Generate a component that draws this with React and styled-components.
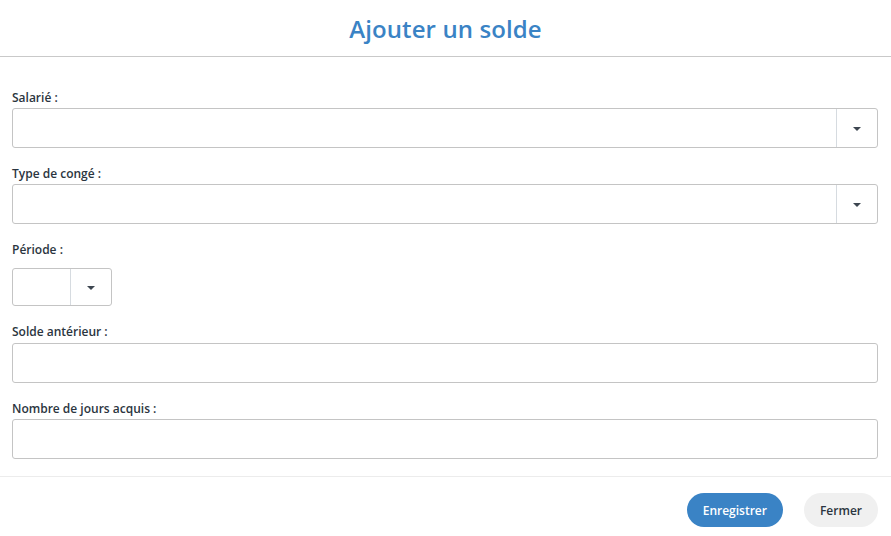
import React from "react";
import styled, { createGlobalStyle } from "styled-components";

const GlobalStyle = createGlobalStyle`
  html, body {
    margin: 0;
    padding: 0;
    background: #fff;
    font-family: "Open Sans", "Noto Sans", Arial, sans-serif;
  }
`;

const Modal = styled.div`
  width: 891px;
  height: 536px;
  display: flex;
  flex-direction: column;
  background: #fff;
`;

const Header = styled.header`
  height: 56px;
  border-bottom: 1px solid #c9c9c9;
  display: flex;
  align-items: center;
  justify-content: center;
`;

const Title = styled.h1`
  margin: 0;
  font-size: 24px;
  font-weight: 600;
  color: #3a83c5;
  letter-spacing: 0.1px;
`;

const Body = styled.div`
  padding: 33px 13px 17px 12px;
  display: flex;
  flex-direction: column;
  gap: 18px;
  border-bottom: 1px solid #ececec;
`;

const Field = styled.div`
  display: flex;
  flex-direction: column;
`;

const Label = styled.label`
  font-size: 12px;
  font-weight: 600;
  line-height: 16px;
  color: #2b3540;
  margin-bottom: ${(p) => p.$gap || 2}px;
`;

const Input = styled.input`
  height: 40px;
  box-sizing: border-box;
  border: 1px solid #c4c4c4;
  border-radius: 3px;
  padding: 0 10px;
  font: inherit;
  outline: none;
`;

const Select = styled.div`
  display: flex;
  height: ${(p) => p.$height || 40}px;
  width: ${(p) => (p.$width ? `${p.$width}px` : "auto")};
  box-sizing: border-box;
  border: 1px solid #c4c4c4;
  border-radius: 3px;
`;

const SelectValue = styled.div`
  flex: 1;
`;

const SelectToggle = styled.div`
  width: 40px;
  border-left: 1px solid #d6dbe0;
  display: flex;
  align-items: center;
  justify-content: center;
`;

const Caret = styled.span`
  width: 0;
  height: 0;
  border-left: 4px solid transparent;
  border-right: 4px solid transparent;
  border-top: 4px solid #3d4650;
  margin-top: 1px;
`;

const Footer = styled.footer`
  flex: 1;
  display: flex;
  align-items: center;
  justify-content: flex-end;
  gap: 21px;
  padding: 7px 13px 0 0;
`;

const Button = styled.button`
  height: 34px;
  border: none;
  border-radius: 17px;
  padding: 0 16px;
  font-family: inherit;
  font-size: 12px;
  font-weight: 600;
  cursor: pointer;
  background: ${(p) => (p.$primary ? "#3a83c5" : "#f0f0f0")};
  color: ${(p) => (p.$primary ? "#fff" : "#2b3540")};
`;

function Dropdown({ width, height }) {
  return (
    <Select $width={width} $height={height}>
      <SelectValue />
      <SelectToggle>
        <Caret />
      </SelectToggle>
    </Select>
  );
}

export default function App() {
  return (
    <Modal>
      <GlobalStyle />
      <Header>
        <Title>Ajouter un solde</Title>
      </Header>
      <Body>
        <Field>
          <Label>Salarié :</Label>
          <Dropdown />
        </Field>
        <Field>
          <Label>Type de congé :</Label>
          <Dropdown />
        </Field>
        <Field>
          <Label $gap={10}>Période :</Label>
          <Dropdown width={100} height={38} />
        </Field>
        <Field>
          <Label $gap={3}>Solde antérieur :</Label>
          <Input />
        </Field>
        <Field>
          <Label>Nombre de jours acquis :</Label>
          <Input />
        </Field>
      </Body>
      <Footer>
        <Button $primary>Enregistrer</Button>
        <Button>Fermer</Button>
      </Footer>
    </Modal>
  );
}
